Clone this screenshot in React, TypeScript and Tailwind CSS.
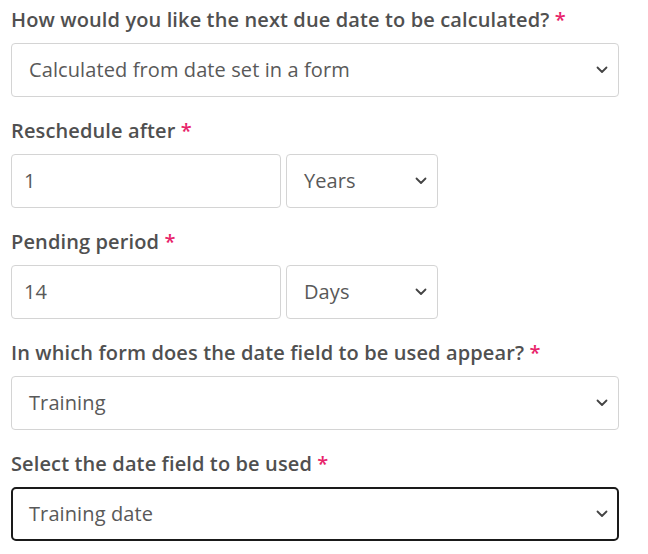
import React from "react";

// small chevron used inside the select boxes
function Chevron() {
  return (
    <svg width="12" height="8" viewBox="0 0 12 8" fill="none" className="shrink-0">
      <path d="M1.5 1.5L6 6L10.5 1.5" stroke="#444" strokeWidth="1.8" strokeLinecap="round" strokeLinejoin="round" />
    </svg>
  );
}

function Label({ children }: { children: React.ReactNode }) {
  return (
    <div className="text-[20px] leading-[26px] font-semibold tracking-[0.12px] text-[#505050] mb-[10px]">
      {children} <span className="text-[#e8246b]">*</span>
    </div>
  );
}

function SelectBox({ value, className, focused }: { value: string; className: string; focused?: boolean }) {
  return (
    <div
      className={
        focused
          ? `${className} h-[54px] flex items-center justify-between pl-[16px] pr-[9px] rounded-[5px] border-2 border-[#1a1a1a] bg-white`
          : `${className} h-[54px] flex items-center justify-between pl-[17px] pr-[10px] rounded-[4px] border border-[#d4d4d4] bg-white`
      }
    >
      <span className="text-[20px] tracking-[0.1px] text-[#595959]">{value}</span>
      <Chevron />
    </div>
  );
}

function TextBox({ value }: { value: string }) {
  return (
    <div className="w-[270px] h-[54px] flex items-center pl-[12px] rounded-[4px] border border-[#d4d4d4] bg-white">
      <span className="text-[20px] text-[#595959]">{value}</span>
    </div>
  );
}

export default function App() {
  return (
    <div
      className="w-[648px] h-[554px] bg-white pt-[7px] pl-[11px] flex flex-col gap-[21px]"
      style={{ fontFamily: '"Open Sans", sans-serif' }}
    >
      <div>
        <Label>How would you like the next due date to be calculated?</Label>
        <SelectBox className="w-[608px]" value="Calculated from date set in a form" />
      </div>
      <div>
        <Label>Reschedule after</Label>
        <div className="flex gap-[5px]">
          <TextBox value="1" />
          <SelectBox className="w-[152px]" value="Years" />
        </div>
      </div>
      <div>
        <Label>Pending period</Label>
        <div className="flex gap-[5px]">
          <TextBox value="14" />
          <SelectBox className="w-[152px]" value="Days" />
        </div>
      </div>
      <div>
        <Label>In which form does the date field to be used appear?</Label>
        <SelectBox className="w-[608px]" value="Training" />
      </div>
      <div>
        <Label>Select the date field to be used</Label>
        <SelectBox className="w-[608px]" value="Training date" focused />
      </div>
    </div>
  );
}
